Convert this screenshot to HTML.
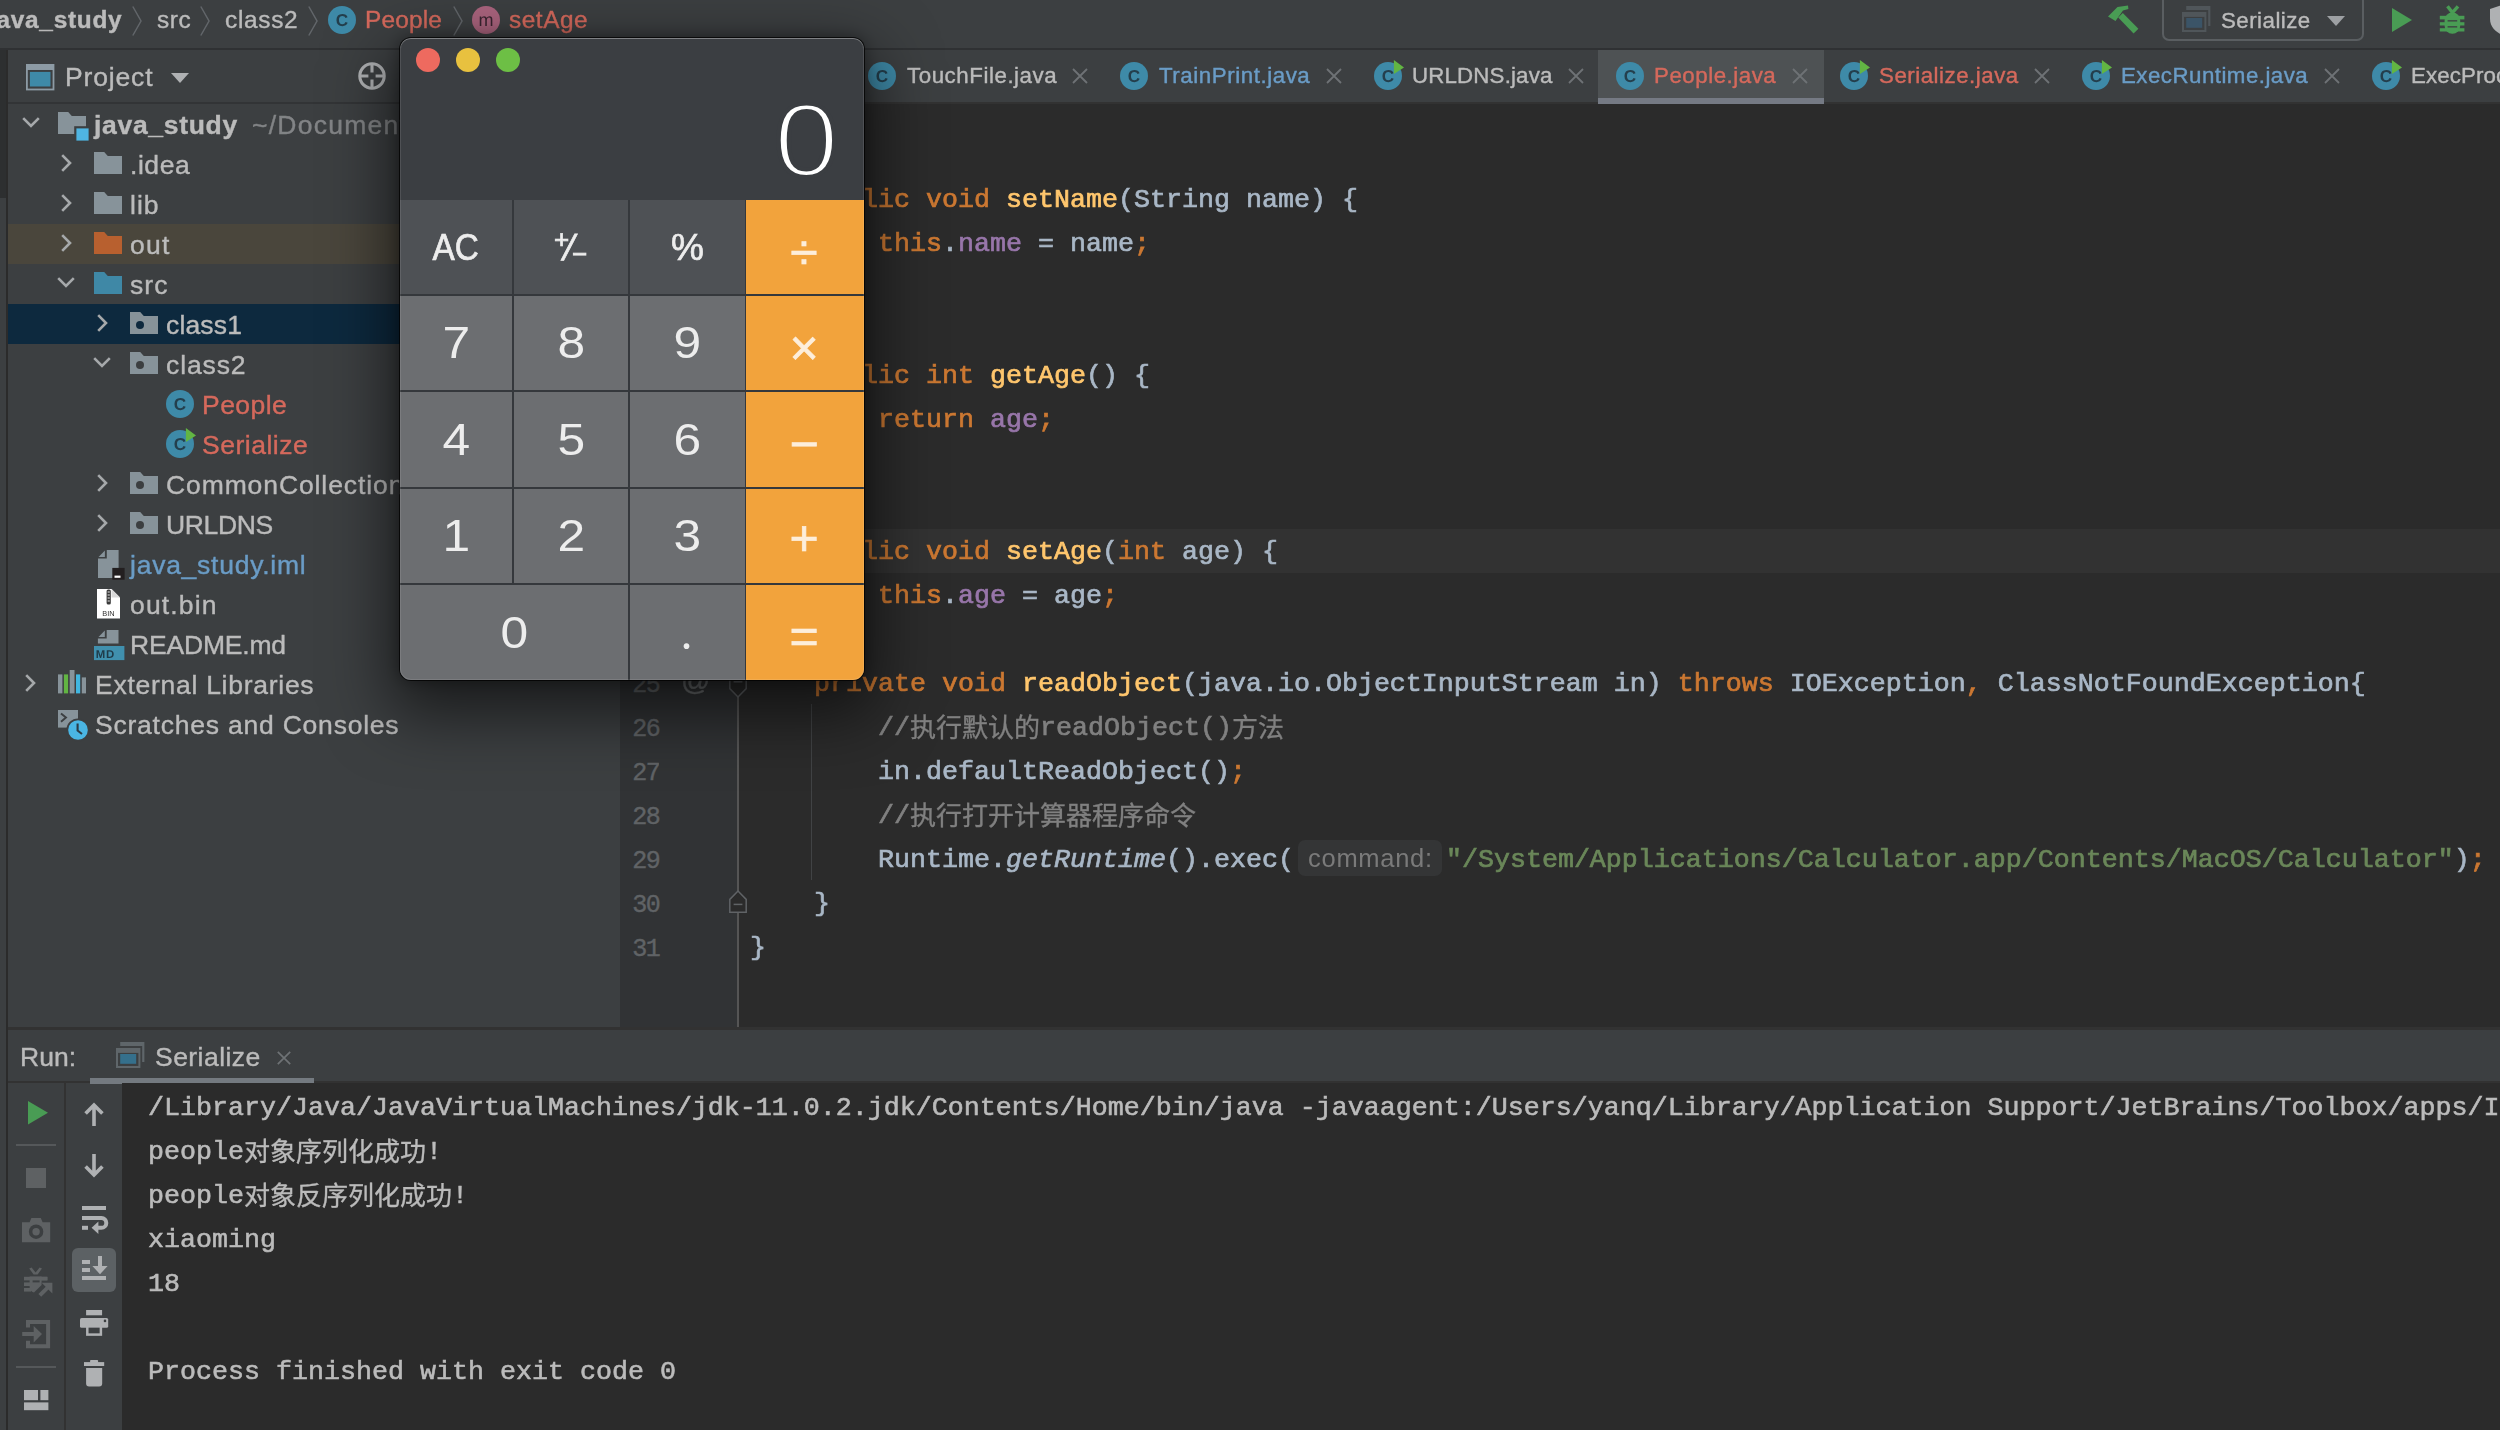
<!DOCTYPE html>
<html lang="zh"><head><meta charset="utf-8"><title>IDE</title>
<style>
*{box-sizing:border-box;margin:0;padding:0}
html,body{width:2500px;height:1430px;overflow:hidden;background:#2b2b2b}
body{position:relative;font-family:"Liberation Sans", "Noto Sans CJK SC", sans-serif;font-size:26px;color:#bbbbbb;-webkit-font-smoothing:antialiased}
.abs{position:absolute}
.t{position:absolute;white-space:pre;line-height:40px;height:40px;will-change:transform;-webkit-text-stroke:0.4px}
svg{position:absolute;overflow:visible;will-change:transform}
svg text{text-rendering:geometricPrecision}
#topbar{position:absolute;left:0;top:0;width:2500px;height:48px;background:#3c3f41}
#topline{position:absolute;left:0;top:48px;width:2500px;height:2px;background:#2f3133}
#strip{position:absolute;left:0;top:50px;width:5.6px;height:1380px;background:#3c3f41}
#stripsel{position:absolute;left:0;top:50px;width:5.6px;height:148px;background:#2d2f30}
#proj{position:absolute;left:8px;top:50px;width:612px;height:978px;background:#3c3f41;overflow:hidden}
#projhdrline{position:absolute;left:0;top:52px;width:612px;height:2px;background:#323436}
.row{position:absolute;left:0;width:612px;height:40px}
#tabs{position:absolute;left:620px;top:50px;width:1880px;height:52px;background:#3c3f41}
#tabline{position:absolute;left:620px;top:102px;width:1880px;height:2px;background:#323232}
#acttab{position:absolute;left:1598px;top:50px;width:226px;height:52px;background:#4e5254}
#actul{position:absolute;left:1598px;top:98px;width:226px;height:5.7px;background:#757a84}
#editor{position:absolute;left:620px;top:104px;width:1880px;height:924px;background:#2b2b2b;overflow:hidden}
#gutter{position:absolute;left:0;top:0;width:118px;height:924px;background:#313335}
#gutline{position:absolute;left:117px;top:0;width:2px;height:924px;background:#555555}
#curline{position:absolute;left:119px;top:425px;width:1761px;height:44px;background:#323232}
.ln{position:absolute;left:0;width:39px;margin-top:2px;text-align:right;color:#606366;font-family:"Liberation Mono", "Noto Sans CJK SC", monospace;font-size:26.67px;letter-spacing:-1.8px;-webkit-text-stroke:0.4px;transform:scaleX(0.94);transform-origin:100% 50%;line-height:44px;height:44px;white-space:pre}
.cl{position:absolute;left:130px;margin-top:1px;-webkit-text-stroke:0.7px;will-change:transform;white-space:pre;font-family:"Liberation Mono", "Noto Sans CJK SC", monospace;font-size:26.67px;line-height:44px;height:44px;color:#a9b7c6}
.k{color:#cc7832}.f{color:#ffc66d}.p{color:#9876aa}.s{color:#6a8759}.c{color:#808080}.i{font-style:italic}
.cj{font-family:"Noto Sans CJK SC",sans-serif;font-size:26px;letter-spacing:0px;line-height:0;-webkit-text-stroke:0.35px;position:relative;top:1.5px}
#hsep{position:absolute;left:8px;top:1027px;width:2492px;height:3px;background:#323232}
#run{position:absolute;left:8px;top:1030px;width:2492px;height:400px;background:#3c3f41}
#runhdrline{position:absolute;left:0;top:51px;width:2492px;height:2px;background:#323232}
#console{position:absolute;left:114px;top:53px;width:2378px;height:347px;background:#2b2b2b;overflow:hidden}
.co{position:absolute;left:26px;margin-top:1px;-webkit-text-stroke:0.6px;will-change:transform;white-space:pre;font-family:"Liberation Mono", "Noto Sans CJK SC", monospace;font-size:26.67px;line-height:44px;height:44px;color:#bbbbbb}
#calc{position:absolute;left:400px;top:38px;width:464px;height:642px;border-radius:11px;background:#3b3e42;box-shadow:0 0 0 1px rgba(0,0,0,.75),0 24px 64px 10px rgba(0,0,0,.58),0 0 16px rgba(0,0,0,.38);overflow:hidden}
.btn{position:absolute;will-change:transform;color:#ededed;text-align:center;font-family:"Liberation Sans", "Noto Sans CJK SC", sans-serif}
.bf{background:#4e5155}.bd{background:#6c6e71}.bo{background:#f2a33c}

#disp{will-change:transform;right:25px;top:41.5px;height:120px;line-height:120px;font-size:104px;color:#fff;-webkit-text-stroke:3.9px #3b3e42;transform:scaleX(1.12);transform-origin:100% 50%}
.btn .g{display:inline-block}
.dg{font-size:44px}.dg .g{transform:scaleX(1.13)}
.fn{font-size:37px;-webkit-text-stroke:0.7px #ededed}.fn .g{position:relative;top:1px}.ac .g{transform:scaleX(0.9)}
.op{font-size:50px;color:#fdeedb;-webkit-text-stroke:0.7px #fdeedb}
.op .g{position:relative;top:4.5px;left:-1px}
.dot{font-family:"Liberation Serif",serif;font-size:48px}.dot .g{position:relative;top:-0.5px;left:-1px;transform:none}
.opp .g{top:2px}.ope .g{top:3.5px}
.pm{display:inline-block;position:relative;width:32px;height:40px;vertical-align:middle}
.pm span{position:absolute;line-height:1}
.pm .pp{left:-1px;top:-3px;font-size:26px}
.pm .ps{left:9px;top:1px;font-size:36px;transform:skewX(-14deg)}
.pm .pn{left:17px;top:12px;font-size:26px}
.hint{display:inline-block;font-family:"Liberation Sans",sans-serif;font-size:25.5px;line-height:36px;height:36px;width:144px;text-align:center;vertical-align:top;margin:2px 4px 0 4px;padding:0 0 0 1px;background:#343536;color:#7a7a7a;border-radius:7px;letter-spacing:0.7px;-webkit-text-stroke:0}
</style></head>
<body>
<div id="topbar"></div><div id="topline"></div>
<div class="t" style="left:-11.5px;top:0.0px;font-size:24.40px;color:#bbbbbb;letter-spacing:0.72px;font-weight:bold;">java_study</div>
<svg style="left:132.0px;top:6.0px;" width="10" height="30" viewBox="0 0 10 30"><path d="M0.8 0.5 L9 15 L0.8 29.5" fill="none" stroke="#62666a" stroke-width="1.5"/></svg>
<div class="t" style="left:156.5px;top:0.0px;font-size:24.40px;color:#bbbbbb;letter-spacing:0.59px;">src</div>
<svg style="left:200.0px;top:6.0px;" width="10" height="30" viewBox="0 0 10 30"><path d="M0.8 0.5 L9 15 L0.8 29.5" fill="none" stroke="#62666a" stroke-width="1.5"/></svg>
<div class="t" style="left:224.5px;top:0.0px;font-size:24.40px;color:#bbbbbb;letter-spacing:0.70px;">class2</div>
<svg style="left:308.0px;top:6.0px;" width="10" height="30" viewBox="0 0 10 30"><path d="M0.8 0.5 L9 15 L0.8 29.5" fill="none" stroke="#62666a" stroke-width="1.5"/></svg>
<svg style="left:327.0px;top:5.0px;" width="30" height="30" viewBox="0 0 30 30"><circle cx="15" cy="15" r="14" fill="#3e8aa8"/><text x="15" y="21.2" text-anchor="middle" font-family="Liberation Sans, sans-serif" font-size="17.2" font-weight="bold" fill="#243f4d" style="-webkit-text-stroke:0.2px #243f4d">C</text></svg>
<div class="t" style="left:365.0px;top:0.0px;font-size:24.40px;color:#d5695c;letter-spacing:0.19px;">People</div>
<svg style="left:453.0px;top:6.0px;" width="10" height="30" viewBox="0 0 10 30"><path d="M0.8 0.5 L9 15 L0.8 29.5" fill="none" stroke="#62666a" stroke-width="1.5"/></svg>
<svg style="left:471.0px;top:5.0px;" width="30" height="30" viewBox="0 0 30 30"><circle cx="15" cy="15" r="14" fill="#ab647e"/><text x="15" y="20.6" text-anchor="middle" font-family="Liberation Sans, sans-serif" font-size="18" fill="#3a2530" style="-webkit-text-stroke:0.3px #3a2530">m</text></svg>
<div class="t" style="left:508.5px;top:0.0px;font-size:24.40px;color:#d5695c;letter-spacing:0.55px;">setAge</div>
<svg style="left:2106.0px;top:4.0px;" width="34" height="32" viewBox="0 0 34 32"><g fill="#499c54"><path d="M2 12.5 L11.5 3 L22 1.5 L22.4 5 L17 6.5 L9.5 17 Z"/><path d="M12.2 13.4 L16.8 9 L32.4 24.8 L27.6 29.6 Z"/></g></svg>
<div class="abs" style="left:2162px;top:-6px;width:202px;height:47px;border:2px solid #5a5e61;border-radius:7px"></div>
<svg style="left:2181.9px;top:5.9px;" width="28.4" height="26" viewBox="0 0 28.4 26"><path d="M4.2 0 H28.4 V20 H26.2 V3.9 H4.2 Z" fill="#50565a"/><rect x="0" y="6" width="24.4" height="20" fill="#50565a"/><rect x="2" y="10.9" width="20.4" height="13.1" fill="#3c3f41"/><rect x="4.2" y="12" width="16" height="9.8" fill="#3b5467"/></svg>
<div class="t" style="left:2220.5px;top:0.8px;font-size:22.30px;color:#bbbbbb;letter-spacing:0.47px;">Serialize</div>
<svg style="left:2327.0px;top:16.0px;" width="18" height="10" viewBox="0 0 18 10"><path d="M0 0 H18 L9 10 Z" fill="#9da0a3"/></svg>
<svg style="left:2392.0px;top:8.0px;" width="20" height="24" viewBox="0 0 20 24"><path d="M0 0 L20 12 L0 24 Z" fill="#499c54"/></svg>
<svg style="left:2439.0px;top:5.0px;" width="26" height="30" viewBox="0 0 26 30"><g fill="#499c54"><path d="M8.5 1.3 L13.4 7.6 L19 1.3" fill="none" stroke="#499c54" stroke-width="3.4"/><rect x="5.6" y="7.4" width="15.6" height="21.4" rx="7.7"/><rect x="0.8" y="10.8" width="24.6" height="3.6"/><rect x="0.8" y="17.2" width="24.6" height="3.3"/><rect x="0.8" y="23.2" width="24.6" height="3.3"/></g><rect x="8.6" y="15.2" width="9.6" height="1.3" fill="#3c3f41"/><rect x="8.6" y="21.2" width="9.6" height="1.3" fill="#3c3f41"/></svg>
<svg style="left:2490.0px;top:5.0px;" width="24" height="30" viewBox="0 0 24 30"><path d="M0 4 L12 0 L24 4 V14 C24 22 18 27 12 30 C6 27 0 22 0 14 Z" fill="#afb1b3"/></svg>
<div id="strip"></div><div id="stripsel"></div>
<div id="proj">
<svg style="left:18.0px;top:13.8px;" width="28.4" height="26.4" viewBox="0 0 28.4 26.4"><rect x="0" y="0" width="28.4" height="26.4" fill="#8d9ba5"/><rect x="1.8" y="6" width="24.8" height="18.6" fill="#3c3f41"/><rect x="3.9" y="7.9" width="20.6" height="14.6" fill="#3e8aa8"/></svg>
<div class="t" style="left:57.0px;top:7.0px;font-size:26.50px;color:#bbbbbb;letter-spacing:0.85px;">Project</div>
<svg style="left:163.0px;top:23.0px;" width="18" height="10" viewBox="0 0 18 10"><path d="M0 0 H18 L9 10 Z" fill="#afb1b3"/></svg>
<svg style="left:350.0px;top:12.0px;" width="28" height="28" viewBox="0 0 28 28"><circle cx="14" cy="14" r="12.2" fill="none" stroke="#afb1b3" stroke-width="3.1"/><path d="M14 1 V10.4 M14 17.6 V27 M1 14 H10.4 M17.6 14 H27" stroke="#afb1b3" stroke-width="3.1"/></svg>
<div id="projhdrline"></div>
<div class="row" style="top:174px;background:#4a463c"></div>
<div class="row" style="top:254px;background:#0d293e"></div>
<svg style="left:14.0px;top:66.8px;" width="18" height="11" viewBox="0 0 18 11"><path d="M1.2 1.2 L9 9 L16.8 1.2" fill="none" stroke="#a6a9ab" stroke-width="2.6"/></svg>
<svg style="left:50.0px;top:62.0px;" width="32" height="30" viewBox="0 0 32 30"><path d="M0 0 H10.2 L13.8 4 H28 V22 H0 Z" fill="#87939a"/><rect x="16.2" y="14.2" width="15.6" height="15.6" fill="#3c3f41"/><rect x="18.4" y="16.4" width="12.2" height="12.2" fill="#4fb5e2"/></svg>
<div class="t" style="left:86.0px;top:55.0px;font-size:26.50px;color:#bbbbbb;letter-spacing:0.69px;font-weight:bold;">java_study</div>
<div class="t" style="left:244.0px;top:55.0px;font-size:26.50px;color:#828486;letter-spacing:1.25px;">~/Documents/java_study</div>
<svg style="left:52.5px;top:104.2px;" width="11" height="18" viewBox="0 0 11 18"><path d="M1.2 1.2 L9 9 L1.2 16.8" fill="none" stroke="#a6a9ab" stroke-width="2.6"/></svg>
<svg style="left:86.0px;top:102.0px;" width="28" height="22" viewBox="0 0 28 22"><path d="M0 0 H10.2 L13.8 4 H28 V22 H0 Z" fill="#87939a"/></svg>
<div class="t" style="left:122.0px;top:95.0px;font-size:26.50px;color:#bbbbbb;letter-spacing:0.56px;">.idea</div>
<svg style="left:52.5px;top:144.2px;" width="11" height="18" viewBox="0 0 11 18"><path d="M1.2 1.2 L9 9 L1.2 16.8" fill="none" stroke="#a6a9ab" stroke-width="2.6"/></svg>
<svg style="left:86.0px;top:142.0px;" width="28" height="22" viewBox="0 0 28 22"><path d="M0 0 H10.2 L13.8 4 H28 V22 H0 Z" fill="#87939a"/></svg>
<div class="t" style="left:122.0px;top:135.0px;font-size:26.50px;color:#bbbbbb;letter-spacing:0.99px;">lib</div>
<svg style="left:52.5px;top:184.2px;" width="11" height="18" viewBox="0 0 11 18"><path d="M1.2 1.2 L9 9 L1.2 16.8" fill="none" stroke="#a6a9ab" stroke-width="2.6"/></svg>
<svg style="left:86.0px;top:182.0px;" width="28" height="22" viewBox="0 0 28 22"><path d="M0 0 H10.2 L13.8 4 H28 V22 H0 Z" fill="#b8602f"/></svg>
<div class="t" style="left:122.0px;top:175.0px;font-size:26.50px;color:#bbbbbb;letter-spacing:1.26px;">out</div>
<svg style="left:49.0px;top:226.8px;" width="18" height="11" viewBox="0 0 18 11"><path d="M1.2 1.2 L9 9 L16.8 1.2" fill="none" stroke="#a6a9ab" stroke-width="2.6"/></svg>
<svg style="left:86.0px;top:222.0px;" width="28" height="22" viewBox="0 0 28 22"><path d="M0 0 H10.2 L13.8 4 H28 V22 H0 Z" fill="#3f88a6"/></svg>
<div class="t" style="left:122.0px;top:215.0px;font-size:26.50px;color:#bbbbbb;letter-spacing:1.07px;">src</div>
<svg style="left:88.5px;top:264.2px;" width="11" height="18" viewBox="0 0 11 18"><path d="M1.2 1.2 L9 9 L1.2 16.8" fill="none" stroke="#a6a9ab" stroke-width="2.6"/></svg>
<svg style="left:122.0px;top:262.0px;" width="28" height="22" viewBox="0 0 28 22"><path d="M0 0 H10.2 L13.8 4 H28 V22 H0 Z" fill="#87939a"/><circle cx="10" cy="13" r="4" fill="#0d293e"/></svg>
<div class="t" style="left:158.0px;top:255.0px;font-size:26.50px;color:#bbbbbb;letter-spacing:0.16px;">class1</div>
<svg style="left:85.0px;top:306.8px;" width="18" height="11" viewBox="0 0 18 11"><path d="M1.2 1.2 L9 9 L16.8 1.2" fill="none" stroke="#a6a9ab" stroke-width="2.6"/></svg>
<svg style="left:122.0px;top:302.0px;" width="28" height="22" viewBox="0 0 28 22"><path d="M0 0 H10.2 L13.8 4 H28 V22 H0 Z" fill="#87939a"/><circle cx="10" cy="13" r="4" fill="#3c3f41"/></svg>
<div class="t" style="left:158.0px;top:295.0px;font-size:26.50px;color:#bbbbbb;letter-spacing:0.89px;">class2</div>
<svg style="left:88.5px;top:424.2px;" width="11" height="18" viewBox="0 0 11 18"><path d="M1.2 1.2 L9 9 L1.2 16.8" fill="none" stroke="#a6a9ab" stroke-width="2.6"/></svg>
<svg style="left:122.0px;top:422.0px;" width="28" height="22" viewBox="0 0 28 22"><path d="M0 0 H10.2 L13.8 4 H28 V22 H0 Z" fill="#87939a"/><circle cx="10" cy="13" r="4" fill="#3c3f41"/></svg>
<div class="t" style="left:158.0px;top:415.0px;font-size:26.50px;color:#bbbbbb;letter-spacing:0.90px;">CommonCollections</div>
<svg style="left:88.5px;top:464.2px;" width="11" height="18" viewBox="0 0 11 18"><path d="M1.2 1.2 L9 9 L1.2 16.8" fill="none" stroke="#a6a9ab" stroke-width="2.6"/></svg>
<svg style="left:122.0px;top:462.0px;" width="28" height="22" viewBox="0 0 28 22"><path d="M0 0 H10.2 L13.8 4 H28 V22 H0 Z" fill="#87939a"/><circle cx="10" cy="13" r="4" fill="#3c3f41"/></svg>
<div class="t" style="left:158.0px;top:455.0px;font-size:26.50px;color:#bbbbbb;letter-spacing:-0.36px;">URLDNS</div>
<svg style="left:157.0px;top:339.0px;" width="30" height="30" viewBox="0 0 30 30"><circle cx="15" cy="15" r="14" fill="#3e8aa8"/><text x="15" y="21.2" text-anchor="middle" font-family="Liberation Sans, sans-serif" font-size="17.2" font-weight="bold" fill="#243f4d" style="-webkit-text-stroke:0.2px #243f4d">C</text></svg>
<div class="t" style="left:194.0px;top:335.0px;font-size:26.50px;color:#d5695c;letter-spacing:0.45px;">People</div>
<svg style="left:157.0px;top:379.0px;" width="30" height="30" viewBox="0 0 30 30"><circle cx="15" cy="15" r="14" fill="#3e8aa8"/><text x="15" y="21.2" text-anchor="middle" font-family="Liberation Sans, sans-serif" font-size="17.2" font-weight="bold" fill="#243f4d" style="-webkit-text-stroke:0.2px #243f4d">C</text><path d="M20.9 -0.9 L31 6.4 L20.9 13.1 Z" fill="#62b543"/></svg>
<div class="t" style="left:194.0px;top:375.0px;font-size:26.50px;color:#d5695c;letter-spacing:0.51px;">Serialize</div>
<svg style="left:89.7px;top:500.0px;" width="27" height="30" viewBox="0 0 27 30"><path d="M8.8 0 H20.6 V27.9 H0 V8.4 H8.8 Z" fill="#87939a"/><path d="M0.6 6.9 L6.9 0.6 V6.9 Z" fill="#87939a"/><rect x="14.3" y="17.9" width="12.3" height="11.8" fill="#231f20"/><rect x="16.5" y="25.6" width="6" height="2.2" fill="#ffffff"/></svg>
<div class="t" style="left:122.0px;top:495.0px;font-size:26.50px;color:#6a9cc6;letter-spacing:0.75px;">java_study.iml</div>
<svg style="left:88.6px;top:539.0px;" width="24" height="30" viewBox="0 0 24 30"><path d="M0 0 H14.5 L23 8.5 V29.4 H0 Z" fill="#ffffff"/><path d="M14.5 0 L23 8.5 H14.5 Z" fill="#d9d9d9"/><rect x="9.6" y="0.5" width="4.2" height="15" rx="1.6" fill="#3a3a3a"/><path d="M10.6 3 h2.2 M10.6 6 h2.2 M10.6 9 h2.2 M10.6 12 h2.2" stroke="#e8e8e8" stroke-width="1.1"/><text x="11.5" y="26.6" text-anchor="middle" font-family="Liberation Sans, sans-serif" font-size="7.4" fill="#333">BIN</text></svg>
<div class="t" style="left:122.0px;top:535.0px;font-size:26.50px;color:#bbbbbb;letter-spacing:1.14px;">out.bin</div>
<svg style="left:85.8px;top:580.0px;" width="31" height="31" viewBox="0 0 31 31"><path d="M12.7 0 H24.5 V13.6 H3.9 V8.4 H12.7 Z" fill="#87939a"/><path d="M4.5 6.9 L10.8 0.6 V6.9 Z" fill="#87939a"/><rect x="0" y="16" width="30.4" height="14.1" fill="#4090ae"/><text x="1.8" y="27.6" font-family="Liberation Sans, sans-serif" font-size="11.4" font-weight="bold" fill="#1f3b49" letter-spacing="0.7">MD</text></svg>
<div class="t" style="left:122.0px;top:575.0px;font-size:26.50px;color:#bbbbbb;letter-spacing:-0.18px;">README.md</div>
<svg style="left:17.0px;top:623.7px;" width="11" height="18" viewBox="0 0 11 18"><path d="M1.2 1.2 L9 9 L1.2 16.8" fill="none" stroke="#a6a9ab" stroke-width="2.6"/></svg>
<svg style="left:50.0px;top:620.0px;" width="28" height="24" viewBox="0 0 28 24"><rect x="0" y="4.4" width="4.4" height="19" fill="#87939a"/><rect x="5.9" y="4.4" width="4.2" height="19" fill="#62b543"/><rect x="11.7" y="0" width="4.8" height="23.4" fill="#87939a"/><rect x="18" y="4.4" width="4.2" height="19" fill="#40b6e0"/><rect x="23.8" y="7.4" width="4.2" height="16" fill="#87939a"/></svg>
<div class="t" style="left:87.0px;top:615.0px;font-size:26.50px;color:#bbbbbb;letter-spacing:0.73px;">External Libraries</div>
<svg style="left:50.0px;top:660.0px;" width="32" height="32" viewBox="0 0 32 32"><rect x="0" y="0" width="20" height="17.6" fill="#87939a"/><path d="M3 3.4 L8 7.6 L3 11.8" fill="none" stroke="#3c3f41" stroke-width="1.9"/><circle cx="20" cy="20" r="11.6" fill="#3c3f41"/><circle cx="20" cy="20" r="9.8" fill="#4ab5e3"/><path d="M19.6 13.6 V20.6 L24 24" fill="none" stroke="#2b3b45" stroke-width="2.1"/></svg>
<div class="t" style="left:87.0px;top:655.0px;font-size:26.50px;color:#bbbbbb;letter-spacing:0.78px;">Scratches and Consoles</div>
</div>
<div id="tabs"></div><div id="acttab"></div><div id="tabline"></div><div id="actul"></div>
<svg style="left:867.0px;top:61.0px;" width="30" height="30" viewBox="0 0 30 30"><circle cx="15" cy="15" r="14" fill="#3e8aa8"/><text x="15" y="21.2" text-anchor="middle" font-family="Liberation Sans, sans-serif" font-size="17.2" font-weight="bold" fill="#243f4d" style="-webkit-text-stroke:0.2px #243f4d">C</text></svg>
<div class="t" style="left:907.0px;top:56.4px;font-size:22.30px;color:#bbbbbb;letter-spacing:0.55px;">TouchFile.java</div>
<svg style="left:1072.0px;top:68.3px;" width="16" height="16" viewBox="0 0 16 16"><path d="M1 1 L15 15 M15 1 L1 15" stroke="#6e7275" stroke-width="1.8" fill="none"/></svg>
<svg style="left:1119.0px;top:61.0px;" width="30" height="30" viewBox="0 0 30 30"><circle cx="15" cy="15" r="14" fill="#3e8aa8"/><text x="15" y="21.2" text-anchor="middle" font-family="Liberation Sans, sans-serif" font-size="17.2" font-weight="bold" fill="#243f4d" style="-webkit-text-stroke:0.2px #243f4d">C</text></svg>
<div class="t" style="left:1158.5px;top:56.4px;font-size:22.30px;color:#6a9cc6;letter-spacing:0.56px;">TrainPrint.java</div>
<svg style="left:1326.0px;top:68.3px;" width="16" height="16" viewBox="0 0 16 16"><path d="M1 1 L15 15 M15 1 L1 15" stroke="#6e7275" stroke-width="1.8" fill="none"/></svg>
<svg style="left:1373.0px;top:61.0px;" width="30" height="30" viewBox="0 0 30 30"><circle cx="15" cy="15" r="14" fill="#3e8aa8"/><text x="15" y="21.2" text-anchor="middle" font-family="Liberation Sans, sans-serif" font-size="17.2" font-weight="bold" fill="#243f4d" style="-webkit-text-stroke:0.2px #243f4d">C</text><path d="M20.9 -0.9 L31 6.4 L20.9 13.1 Z" fill="#62b543"/></svg>
<div class="t" style="left:1412.0px;top:56.4px;font-size:22.30px;color:#bbbbbb;letter-spacing:0.16px;">URLDNS.java</div>
<svg style="left:1568.0px;top:68.3px;" width="16" height="16" viewBox="0 0 16 16"><path d="M1 1 L15 15 M15 1 L1 15" stroke="#6e7275" stroke-width="1.8" fill="none"/></svg>
<svg style="left:1615.0px;top:61.0px;" width="30" height="30" viewBox="0 0 30 30"><circle cx="15" cy="15" r="14" fill="#3e8aa8"/><text x="15" y="21.2" text-anchor="middle" font-family="Liberation Sans, sans-serif" font-size="17.2" font-weight="bold" fill="#243f4d" style="-webkit-text-stroke:0.2px #243f4d">C</text></svg>
<div class="t" style="left:1654.0px;top:56.4px;font-size:22.30px;color:#d5695c;letter-spacing:0.52px;">People.java</div>
<svg style="left:1792.0px;top:68.3px;" width="16" height="16" viewBox="0 0 16 16"><path d="M1 1 L15 15 M15 1 L1 15" stroke="#6e7275" stroke-width="1.8" fill="none"/></svg>
<svg style="left:1839.0px;top:61.0px;" width="30" height="30" viewBox="0 0 30 30"><circle cx="15" cy="15" r="14" fill="#3e8aa8"/><text x="15" y="21.2" text-anchor="middle" font-family="Liberation Sans, sans-serif" font-size="17.2" font-weight="bold" fill="#243f4d" style="-webkit-text-stroke:0.2px #243f4d">C</text><path d="M20.9 -0.9 L31 6.4 L20.9 13.1 Z" fill="#62b543"/></svg>
<div class="t" style="left:1878.5px;top:56.4px;font-size:22.30px;color:#d5695c;letter-spacing:0.51px;">Serialize.java</div>
<svg style="left:2034.0px;top:68.3px;" width="16" height="16" viewBox="0 0 16 16"><path d="M1 1 L15 15 M15 1 L1 15" stroke="#6e7275" stroke-width="1.8" fill="none"/></svg>
<svg style="left:2081.0px;top:61.0px;" width="30" height="30" viewBox="0 0 30 30"><circle cx="15" cy="15" r="14" fill="#3e8aa8"/><text x="15" y="21.2" text-anchor="middle" font-family="Liberation Sans, sans-serif" font-size="17.2" font-weight="bold" fill="#243f4d" style="-webkit-text-stroke:0.2px #243f4d">C</text><path d="M20.9 -0.9 L31 6.4 L20.9 13.1 Z" fill="#62b543"/></svg>
<div class="t" style="left:2121.0px;top:56.4px;font-size:22.30px;color:#6a9cc6;letter-spacing:0.47px;">ExecRuntime.java</div>
<svg style="left:2323.5px;top:68.3px;" width="16" height="16" viewBox="0 0 16 16"><path d="M1 1 L15 15 M15 1 L1 15" stroke="#6e7275" stroke-width="1.8" fill="none"/></svg>
<svg style="left:2371.0px;top:61.0px;" width="30" height="30" viewBox="0 0 30 30"><circle cx="15" cy="15" r="14" fill="#3e8aa8"/><text x="15" y="21.2" text-anchor="middle" font-family="Liberation Sans, sans-serif" font-size="17.2" font-weight="bold" fill="#243f4d" style="-webkit-text-stroke:0.2px #243f4d">C</text><path d="M20.9 -0.9 L31 6.4 L20.9 13.1 Z" fill="#62b543"/></svg>
<div class="t" style="left:2411.0px;top:56.4px;font-size:22.30px;color:#bbbbbb;letter-spacing:0.10px;">ExecProcessBuilder.java</div>
<div id="editor"><div id="gutter"></div><div id="curline"></div><div id="gutline"></div>
<div class="ln" style="top:-15px">12</div>
<div class="ln" style="top:29px">13</div>
<div class="ln" style="top:73px">14</div>
<div class="ln" style="top:117px">15</div>
<div class="ln" style="top:161px">16</div>
<div class="ln" style="top:205px">17</div>
<div class="ln" style="top:249px">18</div>
<div class="ln" style="top:293px">19</div>
<div class="ln" style="top:337px">20</div>
<div class="ln" style="top:381px">21</div>
<div class="ln" style="top:425px">22</div>
<div class="ln" style="top:469px">23</div>
<div class="ln" style="top:513px">24</div>
<div class="ln" style="top:557px">25</div>
<div class="ln" style="top:601px">26</div>
<div class="ln" style="top:645px">27</div>
<div class="ln" style="top:689px">28</div>
<div class="ln" style="top:733px">29</div>
<div class="ln" style="top:777px">30</div>
<div class="ln" style="top:821px">31</div>
<div class="cl" style="top:73px">    <span class="k">public void </span><span class="f">setName</span>(String name) {</div>
<div class="cl" style="top:117px">        <span class="k">this</span>.<span class="p">name</span> = name<span class="k">;</span></div>
<div class="cl" style="top:161px">    }</div>
<div class="cl" style="top:249px">    <span class="k">public int </span><span class="f">getAge</span>() {</div>
<div class="cl" style="top:293px">        <span class="k">return </span><span class="p">age</span><span class="k">;</span></div>
<div class="cl" style="top:337px">    }</div>
<div class="cl" style="top:425px">    <span class="k">public void </span><span class="f">setAge</span>(<span class="k">int </span>age) {</div>
<div class="cl" style="top:469px">        <span class="k">this</span>.<span class="p">age</span> = age<span class="k">;</span></div>
<div class="cl" style="top:513px">    }</div>
<div class="cl" style="top:557px">    <span class="k">private void </span><span class="f">readObject</span>(java.io.ObjectInputStream in) <span class="k">throws </span>IOException<span class="k">,</span> ClassNotFoundException{</div>
<div class="cl" style="top:601px">        <span class="c">//<span class="cj">执行默认的</span>readObject()<span class="cj">方法</span></span></div>
<div class="cl" style="top:645px">        in.defaultReadObject()<span class="k">;</span></div>
<div class="cl" style="top:689px">        <span class="c">//<span class="cj">执行打开计算器程序命令</span></span></div>
<div class="cl" style="top:733px">        Runtime.<span class="i">getRuntime</span>().exec(<span class="hint">command:</span><span class="s">&quot;/System/Applications/Calculator.app/Contents/MacOS/Calculator&quot;</span>)<span class="k">;</span></div>
<div class="cl" style="top:777px">    }</div>
<div class="cl" style="top:821px">}</div>
<svg style="left:109.0px;top:571.0px;" width="18" height="23" viewBox="0 0 18 23"><path d="M0.8 0 V13.6 L9 22 L17.2 13.6 V0" fill="#2b2b2b" stroke="#606366" stroke-width="1.5"/><path d="M4.6 6.8 H13.4" stroke="#606366" stroke-width="1.5"/></svg>
<svg style="left:109.0px;top:786.0px;" width="18" height="23" viewBox="0 0 18 23"><path d="M0.8 22.2 V9.4 L9 1 L17.2 9.4 V22.2 Z" fill="#2b2b2b" stroke="#606366" stroke-width="1.5"/><path d="M4.6 14.4 H13.4" stroke="#606366" stroke-width="1.5"/></svg>
<div class="t" style="left:61px;top:556px;font-size:29px;color:#6e7173;line-height:40px">@</div>
<div class="abs" style="left:190.5px;top:600px;width:1.5px;height:176px;background:#414345"></div>
</div>
<div id="hsep"></div>
<div id="run">
<div class="t" style="left:11.5px;top:6.7px;font-size:26.50px;color:#bbbbbb;letter-spacing:0.01px;">Run:</div>
<svg style="left:108.0px;top:11.7px;" width="28.4" height="26" viewBox="0 0 28.4 26"><path d="M4.2 0 H28.4 V20 H26.2 V3.9 H4.2 Z" fill="#5f666a"/><rect x="0" y="6" width="24.4" height="20" fill="#5f666a"/><rect x="2" y="10.9" width="20.4" height="13.1" fill="#3c3f41"/><rect x="4.2" y="12" width="16" height="9.8" fill="#35708c"/></svg>
<div class="t" style="left:146.5px;top:7.0px;font-size:26.50px;color:#bbbbbb;letter-spacing:0.46px;">Serialize</div>
<svg style="left:269.0px;top:21.0px;" width="14" height="14" viewBox="0 0 14 14"><path d="M0.8 0.8 L13.2 13.2 M13.2 0.8 L0.8 13.2" stroke="#6e7275" stroke-width="1.7" fill="none"/></svg>
<div id="runhdrline"></div>
<div class="abs" style="left:82px;top:48px;width:224px;height:5.5px;background:#747a80"></div>
<div class="abs" style="left:56px;top:53px;width:2px;height:347px;background:#323232"></div>
<svg style="left:20.0px;top:70.5px;" width="20" height="23.5" viewBox="0 0 20 23.5"><path d="M0 0 L20 11.75 L0 23.5 Z" fill="#499c54"/></svg>
<div class="abs" style="left:8px;top:114px;width:40px;height:2px;background:#55585a"></div>
<div class="abs" style="left:18px;top:138px;width:20px;height:20px;background:#5e6163"></div>
<svg style="left:14.0px;top:188.0px;" width="28.2" height="24.2" viewBox="0 0 28.2 24.2"><path d="M0 4.2 H7.6 L9.4 0 H18.8 L20.6 4.2 H28.2 V24.2 H0 Z" fill="#5e6163"/><circle cx="14.1" cy="13.7" r="7.2" fill="#3c3f41"/><circle cx="14.1" cy="13.7" r="3.7" fill="#5e6163"/></svg>
<svg style="left:16.0px;top:238.0px;" width="30" height="30" viewBox="0 0 30 30"><g fill="#5e6163"><path d="M5.6 8.4 H17.6 V17 L10 24.6 A6 6 0 0 1 5.6 19 Z"/><path d="M5.2 0.6 L7.6 -0.6 L11.6 4.4 L15.6 -0.6 L18 0.6 L13.6 6.6 H9.6 Z"/><rect x="0" y="8.8" width="23.4" height="3.6"/><rect x="0" y="14.4" width="8" height="3.6"/><rect x="0" y="20" width="7" height="3.6"/><rect x="16" y="8.8" width="7.4" height="3.6"/></g><rect x="8.6" y="12.4" width="7" height="2" fill="#3c3f41"/><path d="M15.8 27.4 L24.6 18.6" stroke="#5e6163" stroke-width="4"/><path d="M17.6 14.8 H28.4 V25.6 Z" fill="#5e6163"/></svg>
<svg style="left:14.0px;top:289.8px;" width="29" height="29" viewBox="0 0 29 29"><path d="M6 7.4 V2 H26.1 V26.2 H6 V20.8" fill="none" stroke="#5e6163" stroke-width="4"/><path d="M0.2 14 H14" stroke="#5e6163" stroke-width="4"/><path d="M11.7 6 L20 14 L11.7 22.5 Z" fill="#5e6163"/></svg>
<div class="abs" style="left:8px;top:336px;width:40px;height:2px;background:#55585a"></div>
<svg style="left:15.8px;top:359.8px;" width="24.4" height="20.2" viewBox="0 0 24.4 20.2"><rect x="0" y="0" width="14" height="10.2" fill="#afb1b3"/><rect x="16.4" y="0" width="8" height="10.2" fill="#afb1b3"/><rect x="0" y="12.4" width="24.4" height="7.8" fill="#afb1b3"/></svg>
<svg style="left:76.0px;top:72.0px;" width="20" height="24" viewBox="0 0 20 24"><path d="M10 24 V3 M1.6 11.6 L10 3 L18.4 11.6" fill="none" stroke="#afb1b3" stroke-width="3.6"/></svg>
<svg style="left:76.0px;top:124.0px;" width="20" height="24" viewBox="0 0 20 24"><path d="M10 0 V21 M1.6 12.4 L10 21 L18.4 12.4" fill="none" stroke="#afb1b3" stroke-width="3.6"/></svg>
<svg style="left:74.0px;top:176.0px;" width="27" height="28" viewBox="0 0 27 28"><rect x="0" y="0" width="24" height="4" fill="#afb1b3"/><path d="M0 12 H19.4 A4.9 4.9 0 0 1 19.4 21.8 H15" fill="none" stroke="#afb1b3" stroke-width="4"/><path d="M16.4 15.6 L9.6 21.8 L16.4 28 Z" fill="#afb1b3"/><rect x="0" y="19.8" width="6" height="4" fill="#afb1b3"/></svg>
<div class="abs" style="left:64px;top:218px;width:44px;height:44px;border-radius:6px;background:#5c6164"></div>
<svg style="left:74.0px;top:226.0px;" width="26" height="24" viewBox="0 0 26 24"><rect x="0" y="4" width="8" height="4" fill="#afb1b3"/><rect x="0" y="12" width="8" height="4" fill="#afb1b3"/><rect x="0" y="20" width="24" height="4" fill="#afb1b3"/><rect x="16" y="0" width="4" height="11" fill="#afb1b3"/><path d="M10.4 10 H25.6 L18 18.2 Z" fill="#afb1b3"/></svg>
<svg style="left:71.9px;top:280.2px;" width="28.2" height="26.6" viewBox="0 0 28.2 26.6"><rect x="6.1" y="0" width="16" height="5.3" fill="#afb1b3"/><rect x="0" y="8" width="28.2" height="9.8" rx="1.6" fill="#afb1b3"/><rect x="7.3" y="16.4" width="13.6" height="8.2" fill="#3c3f41" stroke="#afb1b3" stroke-width="2.5"/><circle cx="25" cy="10.9" r="1.3" fill="#3c3f41"/></svg>
<svg style="left:75.9px;top:330.0px;" width="20.2" height="26.4" viewBox="0 0 20.2 26.4"><rect x="6.1" y="0" width="8" height="3" rx="0.8" fill="#afb1b3"/><rect x="0" y="2.1" width="20.2" height="3.9" fill="#afb1b3"/><path d="M2.1 8 H18.2 V23.4 A3 3 0 0 1 15.2 26.4 H5.1 A3 3 0 0 1 2.1 23.4 Z" fill="#afb1b3"/></svg>
<div id="console">
<div class="co" style="top:2px">/Library/Java/JavaVirtualMachines/jdk-11.0.2.jdk/Contents/Home/bin/java -javaagent:/Users/yanq/Library/Application Support/JetBrains/Toolbox/apps/IDEA-U/ch-0/211.7142.45/IntelliJ IDEA.app/Contents/lib/idea_rt.jar</div>
<div class="co" style="top:46px">people<span class="cj">对象序列化成功</span>!</div>
<div class="co" style="top:90px">people<span class="cj">对象反序列化成功</span>!</div>
<div class="co" style="top:134px">xiaoming</div>
<div class="co" style="top:178px">18</div>
<div class="co" style="top:222px"></div>
<div class="co" style="top:266px">Process finished with exit code 0</div>
</div>
</div>
<div id="calc">
<div class="abs" style="left:16px;top:10px;width:24px;height:24px;border-radius:50%;background:#ee6a5f"></div>
<div class="abs" style="left:56px;top:10px;width:24px;height:24px;border-radius:50%;background:#e8c13f"></div>
<div class="abs" style="left:96px;top:10px;width:24px;height:24px;border-radius:50%;background:#6dbf45"></div>
<div id="disp" class="abs">0</div>
<div class="abs" style="left:0;top:162px;width:464px;height:480px;background:#35383c"></div>
<div class="btn bf fn ac" style="left:0px;top:162px;width:112px;height:94px;line-height:94px"><span class="g">AC</span></div>
<div class="btn bf fn" style="left:114px;top:162px;width:114px;height:94px;line-height:94px"><span class="pm"><span class="pp">+</span><span class="ps">/</span><span class="pn">−</span></span></div>
<div class="btn bf fn" style="left:230px;top:162px;width:115px;height:94px;line-height:94px"><span class="g">%</span></div>
<div class="btn bo op" style="left:346px;top:162px;width:118px;height:94px;line-height:94px"><span class="g">÷</span></div>
<div class="btn bd dg" style="left:0px;top:258px;width:112px;height:94px;line-height:94px"><span class="g">7</span></div>
<div class="btn bd dg" style="left:114px;top:258px;width:114px;height:94px;line-height:94px"><span class="g">8</span></div>
<div class="btn bd dg" style="left:230px;top:258px;width:115px;height:94px;line-height:94px"><span class="g">9</span></div>
<div class="btn bo op" style="left:346px;top:258px;width:118px;height:94px;line-height:94px"><span class="g">×</span></div>
<div class="btn bd dg" style="left:0px;top:354px;width:112px;height:95px;line-height:95px"><span class="g">4</span></div>
<div class="btn bd dg" style="left:114px;top:354px;width:114px;height:95px;line-height:95px"><span class="g">5</span></div>
<div class="btn bd dg" style="left:230px;top:354px;width:115px;height:95px;line-height:95px"><span class="g">6</span></div>
<div class="btn bo op" style="left:346px;top:354px;width:118px;height:95px;line-height:95px"><span class="g">−</span></div>
<div class="btn bd dg" style="left:0px;top:451px;width:112px;height:94px;line-height:94px"><span class="g">1</span></div>
<div class="btn bd dg" style="left:114px;top:451px;width:114px;height:94px;line-height:94px"><span class="g">2</span></div>
<div class="btn bd dg" style="left:230px;top:451px;width:115px;height:94px;line-height:94px"><span class="g">3</span></div>
<div class="btn bo op opp" style="left:346px;top:451px;width:118px;height:94px;line-height:94px"><span class="g">+</span></div>
<div class="btn bd dg" style="left:0px;top:547px;width:228px;height:95px;line-height:95px"><span class="g">0</span></div>
<div class="btn bd dg dot" style="left:230px;top:547px;width:115px;height:95px;line-height:95px"><span class="g">.</span></div>
<div class="btn bo op ope" style="left:346px;top:547px;width:118px;height:95px;line-height:95px"><span class="g">=</span></div>
<div class="abs" style="left:0;top:0;width:464px;height:642px;border-radius:11px;box-shadow:inset 0 1px 0 rgba(255,255,255,.28),inset 0 0 0 1px rgba(255,255,255,.10)"></div>
</div>
</body></html>
